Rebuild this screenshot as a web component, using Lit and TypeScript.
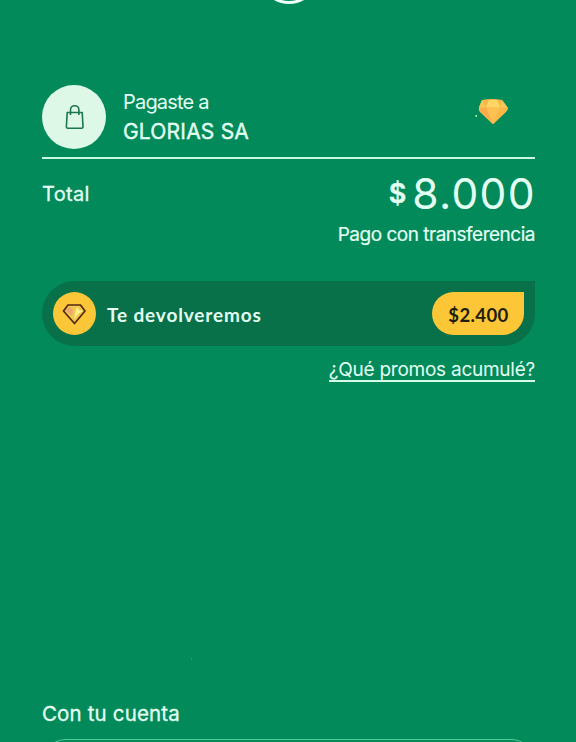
import { LitElement, html, css } from "lit";
import { customElement } from "lit/decorators.js";

@customElement("app-root")
export class AppRoot extends LitElement {
  static styles = css`
    :host { display: block; width: 576px; height: 742px; overflow: hidden; background: #028a5a; color: #e3fff2; font-family: Inter, "Liberation Sans", sans-serif; }
    * { box-sizing: border-box; }
    .screen { position: relative; height: 742px; overflow: hidden; padding: 85px 41px 0 42px; display: flex; flex-direction: column; }
    .screen > * { flex-shrink: 0; }
    .ring { position: absolute; left: 259px; top: -56px; width: 60px; height: 60px; border: 3.5px solid #f0fff8; border-radius: 50%; }
    .speck { position: absolute; left: 191px; top: 658px; width: 1px; height: 2px; background: #25a352; }
    .payee { height: 74px; display: flex; border-bottom: 2px solid #c8f8df; }
    .shop { width: 64px; height: 64px; border-radius: 50%; background: #def8e8; display: grid; place-items: center; }
    .shop svg, .coin svg, .gem svg { display: block; }
    .names { flex: 1; padding: 2px 0 0 17px; line-height: 30px; white-space: nowrap; }
    .small { font-size: 20px; letter-spacing: -0.8px; height: 30px; font-weight: 400; }
    .name { font-size: 21px; letter-spacing: 0.2px; font-weight: 400; -webkit-text-stroke: 0.4px currentColor; }
    .gem { width: 60px; padding-top: 12px; }
    .amount { height: 70px; display: flex; justify-content: space-between; align-items: flex-start; }
    .total { font-size: 20px; line-height: 30px; padding-top: 20px; letter-spacing: 0.3px; -webkit-text-stroke: 0.3px currentColor; }
    .price { display: flex; align-items: center; height: 70px; line-height: 70px; }
    .dollar { font-size: 27px; font-weight: 600; margin-right: 6px; -webkit-text-stroke: 0.4px currentColor; }
    .value { font-size: 42.5px; font-weight: 400; letter-spacing: 1.3px; margin-right: -0.8px; }
    .method { align-self: flex-end; font-size: 19px; line-height: 24px; margin-top: -6px; margin-bottom: -1px; letter-spacing: -0.49px; white-space: nowrap; -webkit-text-stroke: 0.2px currentColor; }
    .reward { margin-top: 35px; height: 65px; border-radius: 33px 0 33px 33px; background: #08714a; display: flex; align-items: center; padding: 0 11px; }
    .coin { width: 43px; height: 43px; border-radius: 50%; background: #fbc638; display: grid; place-items: center; }
    .back { flex: 1; margin-left: 11px; padding-top: 1px; font-family: Lato, sans-serif; font-size: 19px; font-weight: 700; letter-spacing: 0.85px; white-space: nowrap; }
    .badge { width: 92px; height: 43px; border-radius: 22px 0 22px 22px; background: #fcc636; color: #211d0d; display: grid; place-items: center; padding: 3px 0 0 1px; font-family: Lato, sans-serif; font-size: 18.5px; font-weight: 700; letter-spacing: 0.4px; }
    .promos { align-self: flex-end; margin-top: 12px; height: 24px; border-bottom: 2px solid #d5fce9; font-size: 19px; line-height: 24px; letter-spacing: -0.25px; white-space: nowrap; }
    .account { margin-top: 317px; font-size: 20.5px; line-height: 30px; letter-spacing: 0.15px; white-space: nowrap; -webkit-text-stroke: 0.3px currentColor; }
    .panel { margin-top: 10px; height: 60px; border: 1px solid #58c796; border-radius: 24px; }
  `;

  render() {
    return html`
      <main class="screen">
        <div class="ring"></div>
        <header class="payee">
          <div class="shop">
            <svg width="22" height="28" viewBox="0 0 22 28" fill="none" stroke="#1d7552" stroke-width="1.6" stroke-linejoin="round">
              <path d="M4.2 9.5H19.2L20 23.5Q20.1 25.2 18.6 25.2H4.8Q3.3 25.2 3.4 23.5Z"/>
              <path d="M7.5 12V6.9A4.2 4.2 0 0 1 15.9 6.9V12"/>
            </svg>
          </div>
          <div class="names"><div class="small">Pagaste a</div><div class="name">GLORIAS SA</div></div>
          <div class="gem">
            <svg width="34" height="29" viewBox="0 0 34 29">
              <path d="M7 3Q17 1 27 3L33 11Q33 13 31 15L19.5 26Q18 28 16.5 26L5 15Q3 13 4 10Z" fill="#f9b848"/>
              <path d="M7 3L11 10L4 11ZM27 3L25 10L33 11Z" fill="#f2c858"/>
              <path d="M11 10L14 3H22L25 10Z" fill="#ffd566"/>
              <path d="M11 10H25L18 26Z" fill="#ffc252"/>
              <path d="M4 12L11 11L16 24Z" fill="#fba84e"/>
              <path d="M0 18H2V20H1Z" fill="#b8efa5"/>
            </svg>
          </div>
        </header>
        <section class="amount">
          <span class="total">Total</span>
          <div class="price"><span class="dollar">$</span><span class="value">8.000</span></div>
        </section>
        <div class="method">Pago con transferencia</div>
        <section class="reward">
          <div class="coin">
            <svg width="26" height="24" viewBox="0 0 26 24">
              <path d="M6 3H18.5L23 9L12.5 21.5L1.5 9Z" fill="#efc94d"/>
              <path d="M3 8L8 5L11 8L10 14Z" fill="#eda66f"/>
              <path d="M15 5L17 8L21 9L16 12L12.5 17L13 11Z" fill="#fff08a"/>
              <path d="M6 3H18.5L23 9L12.5 21.5L1.5 9Z" fill="none" stroke="#562710" stroke-width="1.7" stroke-linejoin="round"/>
            </svg>
          </div>
          <span class="back">Te devolveremos</span><span class="badge">$2.400</span>
        </section>
        <a class="promos">¿Qué promos acumulé?</a>
        <div class="account">Con tu cuenta</div>
        <section class="panel"></section>
        <i class="speck"></i>
      </main>`;
  }
}
